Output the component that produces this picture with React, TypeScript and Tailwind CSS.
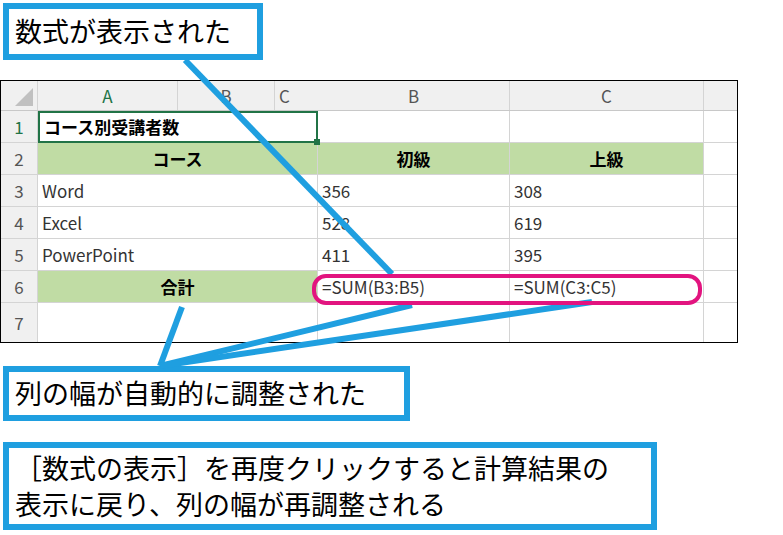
export default function App() {
  const font = { fontFamily: '"Noto Sans CJK JP", "Noto Sans", sans-serif' };
  const cell = "border-r border-b border-[#d4d4d4] h-[32px] flex items-center px-[4px] text-[17px] text-[#333]";
  const rows = [
    ["Word", "356", "308"],
    ["Excel", "528", "619"],
    ["PowerPoint", "411", "395"],
  ];
  const rn = "w-[37px] h-[32px] border-r border-b border-[#d4d4d4] bg-[#f0f0f0] flex items-center justify-center text-[17px] text-[#555]";
  return (
    <div className="relative w-[783px] h-[535px] bg-white overflow-hidden" style={font}>
      <div className="flex flex-col">
        <div className="ml-[3px] mt-[3px] w-[260px] h-[57px] border-[6px] border-[#1f9fe0] flex items-center pl-[6px] text-[27px] text-black">数式が表示された</div>
        <div className="mt-[20px] w-[738px] h-[263px] border border-black flex flex-col">
          <div className="flex h-[30px] bg-[#f0f0f0] border-b border-[#c8c8c8] text-[17px] text-[#555]">
            <div className="w-[37px] border-r border-[#d4d4d4] relative"><div className="absolute right-[4px] bottom-[4px] w-0 h-0 border-l-[18px] border-l-transparent border-b-[18px] border-b-[#c0c0c0]" /></div>
            <div className="w-[140px] border-r border-[#d4d4d4] flex items-center justify-center text-[#217346]">A</div>
            <div className="w-[97px] border-r border-[#d4d4d4] flex items-center justify-center">B</div>
            <div className="w-[43px] flex items-center justify-start pl-[4px]">C</div>
            <div className="w-[192px] border-r border-[#d4d4d4] flex items-center justify-center">B</div>
            <div className="w-[194px] border-r border-[#d4d4d4] flex items-center justify-center">C</div>
            <div className="flex-1" />
          </div>
          <div className="flex">
            <div className={rn + " text-[#217346]"}>1</div>
            <div className="w-[280px] h-[32px] border-2 border-[#217346] flex items-center px-[4px] text-[17px] font-bold text-black relative">コース別受講者数<div className="absolute -right-[4px] -bottom-[4px] w-[6px] h-[6px] bg-[#217346]" /></div>
            <div className={cell + " w-[192px]"} />
            <div className={cell + " w-[194px]"} />
            <div className="flex-1 border-b border-[#d4d4d4]" />
          </div>
          <div className="flex">
            <div className={rn}>2</div>
            <div className={cell + " w-[280px] bg-[#c0dca4] justify-center font-bold text-black"}>コース</div>
            <div className={cell + " w-[192px] bg-[#c0dca4] justify-center font-bold text-black"}>初級</div>
            <div className={cell + " w-[194px] bg-[#c0dca4] justify-center font-bold text-black"}>上級</div>
            <div className="flex-1 border-b border-[#d4d4d4]" />
          </div>
          {rows.map((r, i) => (
            <div className="flex" key={i}>
              <div className={rn}>{i + 3}</div>
              <div className={cell + " w-[280px]"}>{r[0]}</div>
              <div className={cell + " w-[192px]"}>{r[1]}</div>
              <div className={cell + " w-[194px]"}>{r[2]}</div>
              <div className="flex-1 border-b border-[#d4d4d4]" />
            </div>
          ))}
          <div className="flex">
            <div className={rn}>6</div>
            <div className={cell + " w-[280px] bg-[#c0dca4] justify-center font-bold text-black"}>合計</div>
            <div className={cell + " w-[192px]"}>=SUM(B3:B5)</div>
            <div className={cell + " w-[194px]"}>=SUM(C3:C5)</div>
            <div className="flex-1 border-b border-[#d4d4d4]" />
          </div>
          <div className="flex flex-1">
            <div className="w-[37px] border-r border-[#d4d4d4] bg-[#f0f0f0] flex items-center justify-center text-[17px] text-[#555]">7</div>
            <div className="w-[280px] border-r border-[#d4d4d4]" />
            <div className="w-[192px] border-r border-[#d4d4d4]" />
            <div className="w-[194px] border-r border-[#d4d4d4]" />
          </div>
        </div>
        <div className="ml-[3px] mt-[23px] w-[407px] h-[55px] border-[6px] border-[#1f9fe0] flex items-center pl-[6px] text-[27px] text-black">列の幅が自動的に調整された</div>
        <div className="ml-[3px] mt-[21px] w-[654px] h-[88px] border-[6px] border-[#1f9fe0] flex flex-col justify-center pl-[6px] text-[27px] leading-[36px] text-black">
          <div>［数式の表示］を再度クリックすると計算結果の</div>
          <div>表示に戻り、列の幅が再調整される</div>
        </div>
      </div>
      <svg className="absolute left-0 top-0" width="783" height="535">
        <g stroke="#1f9fe0" strokeWidth="6" strokeLinecap="butt">
          <line x1="185" y1="60" x2="392" y2="274" />
          <line x1="160" y1="366" x2="182" y2="307" />
          <line x1="160" y1="366" x2="412" y2="305" />
          <line x1="160" y1="366" x2="592" y2="302" />
        </g>
        <rect x="314" y="276" width="386" height="27" rx="12" fill="none" stroke="#e2147f" strokeWidth="4" />
      </svg>
    </div>
  );
}
